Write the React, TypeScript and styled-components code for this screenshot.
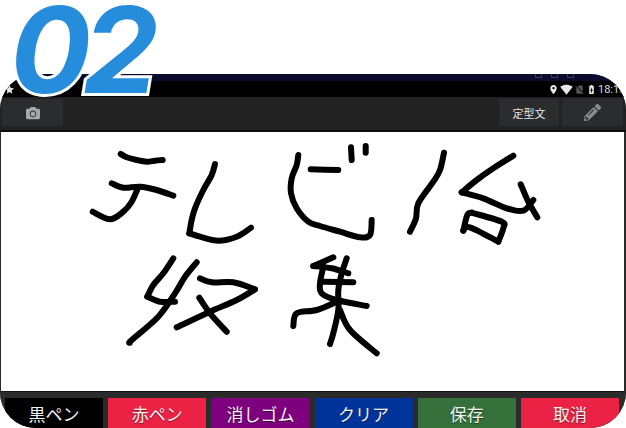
import React, { FC } from 'react';
import styled, { createGlobalStyle } from 'styled-components';
import { FaCamera, FaPencilAlt } from 'react-icons/fa';
import { MdLocationOn, MdSignalWifi4Bar, MdStar, MdBatteryChargingFull, MdSignalCellularNoSim } from 'react-icons/md';

const GlobalStyle = createGlobalStyle`
  html, body {
    margin: 0;
    padding: 0;
    background: #fff;
  }
  body {
    font-family: "Noto Sans CJK JP", "Noto Sans", sans-serif;
  }
`;

const Page = styled.div`
  position: relative;
  width: 626px;
  height: 428px;
  padding-top: 74px;
  box-sizing: border-box;
  overflow: hidden;
`;

const StepNumber = styled.div`
  position: absolute;
  left: 10px;
  top: 0;
  font-family: Inter, "Liberation Sans", sans-serif;
  font-weight: 700;
  font-style: italic;
  font-size: 120px;
  line-height: 100px;
  letter-spacing: -8px;
  color: #268ddd;
  -webkit-text-stroke: 6px #fff;
  paint-order: stroke fill;
  z-index: 2;
`;

const Device = styled.div`
  height: 354px;
  display: flex;
  flex-direction: column;
  background: #2a2a2a;
  border-radius: 36px;
  overflow: hidden;
`;

const NavBand = styled.div`
  height: 7px;
  flex: none;
  display: flex;
  justify-content: flex-end;
  align-items: flex-start;
  gap: 9px;
  padding-right: 52px;
  background: #0b0b30;
`;

const GhostIcon = styled.span`
  width: 5px;
  height: 3px;
  border: 1px solid #3a3a55;
  border-top: none;
`;

const StatusBar = styled.div`
  height: 16px;
  flex: none;
  background: #000;
  display: flex;
  align-items: center;
  justify-content: space-between;
  padding: 0 0 0 4px;
  color: #e6e6e6;
`;

const StatusIcons = styled.div`
  display: flex;
  align-items: center;
  gap: 1px;
`;

const Clock = styled.span`
  font-family: Roboto, sans-serif;
  font-size: 11px;
  color: #ddd;
  width: 28px;
  white-space: nowrap;
  overflow: hidden;
`;

const ActionBar = styled.div`
  height: 35px;
  flex: none;
  box-sizing: border-box;
  display: flex;
  justify-content: space-between;
  padding: 2px 3px 4px 2px;
  background: #222;
  border-bottom: 2px solid #0c0c0c;
`;

const ActionGroup = styled.div`
  display: flex;
  gap: 3px;
`;

const ActionButton = styled.div<{ $w: number }>`
  width: ${(p) => p.$w}px;
  display: flex;
  align-items: center;
  justify-content: center;
  background: #2a2c2d;
  color: #e4e4e4;
  font-size: 11px;
`;

const Canvas = styled.div`
  height: 260px;
  flex: none;
  margin: 0 2px 0 1px;
  background: #fff;
  border-bottom: 1px solid #111;
  box-sizing: border-box;
`;

const Sketch = styled.svg`
  display: block;
  width: 100%;
  height: 100%;
  fill: none;
  stroke: #000;
  stroke-width: 6;
  stroke-linecap: round;
  stroke-linejoin: round;
`;

const ButtonBar = styled.div`
  flex: 1;
  display: flex;
  gap: 5px;
  padding: 6px 7px 0 5px;
  background: #2b2b2b;
`;

const PenButton = styled.div<{ $bg: string }>`
  flex: 1;
  display: flex;
  align-items: center;
  justify-content: center;
  background: ${(p) => p.$bg};
  color: #f2f2f2;
  font-size: 17px;
  text-shadow: 0 1px 1px rgba(0, 0, 0, 0.5);
`;

type Pt = [number, number];

const strokes: Pt[][] = [
  [[120.7, 154], [126.7, 157.3], [136.7, 160], [146.7, 161.7], [155, 160.7], [162.7, 160]],
  [[111.7, 183.3], [123.3, 187.7], [140, 186.7], [156.7, 190], [173.3, 195.7]],
  [[138.3, 187.3], [131.7, 201.7], [123.3, 211.7], [110, 219.3], [92.7, 211.7]],
  [[215, 164], [211.7, 175], [203.3, 190], [195, 208.3], [191.7, 220], [189.3, 233.3]],
  [[189.3, 233.3], [200, 236.7], [218.3, 240.7], [236.7, 236.7], [251, 227.7]],
  [[298.3, 155], [296.7, 165], [291.7, 178.3], [291, 193.3], [296.7, 208.3], [308.3, 221.7], [320, 226], [340, 231.7], [360, 237.3], [370, 235], [371.7, 220]],
  [[310.7, 169.3], [338.3, 170]],
  [[351, 147.3], [351.7, 160]],
  [[365.7, 146], [365.7, 152.7]],
  [[444, 152.7], [440, 170], [433.3, 181.7], [418.3, 203.3], [416, 218.3], [410, 231.7]],
  [[513.3, 155.7], [493.3, 168.3], [476.7, 180], [461.7, 192.3]],
  [[461.7, 192.3], [483.3, 198.3], [506.7, 208.3], [523.3, 210.7], [533.3, 200]],
  [[520.7, 184.3], [528.3, 201.7], [537.3, 217.3]],
  [[463.3, 230.7], [467.3, 215], [471.7, 212.7]],
  [[471.7, 212.7], [501.7, 221.7], [503.3, 228.3], [498.3, 241.7]],
  [[498.3, 241.7], [470, 227.3], [463.3, 230.7]],
  [[173.3, 258.3], [163.3, 273.3], [153.3, 285], [147.3, 296.7]],
  [[147.3, 296.7], [160, 301.7], [175, 301.7]],
  [[196.7, 262.3], [185, 276.7], [175, 293.3], [158.3, 316.7], [131.7, 340], [130, 342.7]],
  [[200, 278.3], [211.7, 282.3], [233.3, 282.3], [255, 289.3]],
  [[255, 289.3], [236.7, 300], [210, 311.7], [176.7, 327.3]],
  [[199.3, 297.7], [210, 313.3], [226.7, 331.7]],
  [[333.3, 257.3], [313.3, 266]],
  [[313.3, 266], [331.7, 268.3], [348.3, 273.3]],
  [[323.3, 266.7], [320, 283.3], [321.7, 293.3], [336.7, 300], [366.7, 306]],
  [[323.3, 281.7], [353.3, 282.3]],
  [[346.7, 258.3], [341.7, 273.3], [338.3, 290], [338.3, 310], [333.3, 333.3], [330, 344]],
  [[293.3, 326], [296.7, 313.3], [316.7, 310], [336.7, 301.7]],
  [[340, 310], [350, 330], [376.7, 353.3]],
];

// catmull-rom through the points so the pen lines look hand drawn
const toPath = (pts: Pt[]) => {
  let d = `M${pts[0][0]} ${pts[0][1]}`;
  for (let i = 0; i < pts.length - 1; i++) {
    const p0 = pts[i - 1] || pts[i];
    const p1 = pts[i];
    const p2 = pts[i + 1];
    const p3 = pts[i + 2] || p2;
    const c1x = p1[0] + (p2[0] - p0[0]) / 6;
    const c1y = p1[1] + (p2[1] - p0[1]) / 6;
    const c2x = p2[0] - (p3[0] - p1[0]) / 6;
    const c2y = p2[1] - (p3[1] - p1[1]) / 6;
    d += ` C${c1x} ${c1y} ${c2x} ${c2y} ${p2[0]} ${p2[1]}`;
  }
  return d;
};

const buttons = [
  { label: '黒ペン', bg: '#000' },
  { label: '赤ペン', bg: '#ec2244' },
  { label: '消しゴム', bg: '#7e007e' },
  { label: 'クリア', bg: '#00349a' },
  { label: '保存', bg: '#35703a' },
  { label: '取消', bg: '#ec2244' },
];

const App: FC = () => {
  return (
    <Page>
      <GlobalStyle />
      <StepNumber>02</StepNumber>
      <Device>
        <NavBand>
          <GhostIcon />
          <GhostIcon />
          <GhostIcon />
        </NavBand>
        <StatusBar>
          <MdStar size={11} />
          <StatusIcons>
            <MdLocationOn size={11} />
            <MdSignalWifi4Bar size={13} />
            <MdSignalCellularNoSim size={11} color="#555" />
            <MdBatteryChargingFull size={11} />
            <Clock>18:18</Clock>
          </StatusIcons>
        </StatusBar>
        <ActionBar>
          <ActionButton $w={61}>
            <FaCamera size={14} color="#a8a8a8" />
          </ActionButton>
          <ActionGroup>
            <ActionButton $w={60}>定型文</ActionButton>
            <ActionButton $w={61}>
              <FaPencilAlt size={17} color="#8a8a8a" />
            </ActionButton>
          </ActionGroup>
        </ActionBar>
        <Canvas>
          <Sketch viewBox="1 132 623 259" preserveAspectRatio="none">
            {strokes.map((s, i) => (
              <path key={i} d={toPath(s)} />
            ))}
          </Sketch>
        </Canvas>
        <ButtonBar>
          {buttons.map((b) => (
            <PenButton key={b.label} $bg={b.bg}>
              {b.label}
            </PenButton>
          ))}
        </ButtonBar>
      </Device>
    </Page>
  );
};

export default App;
